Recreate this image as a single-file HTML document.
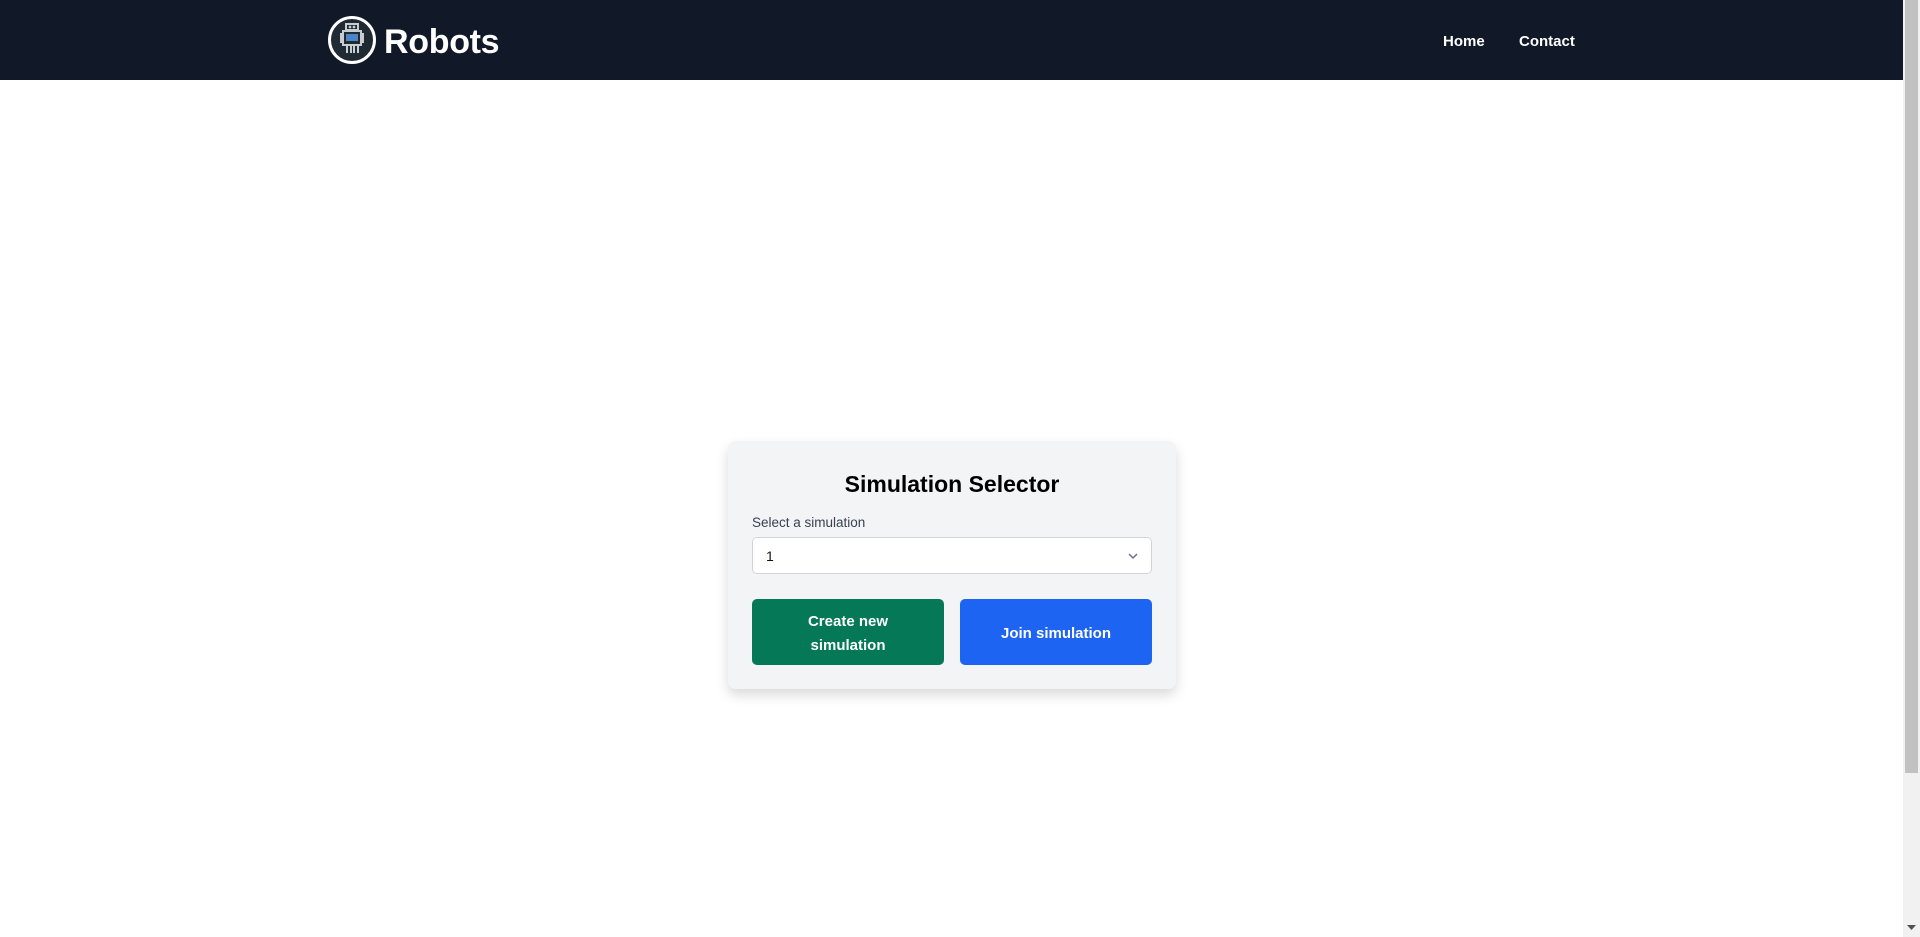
<!DOCTYPE html>
<html><head><meta charset="utf-8"><style>
*{box-sizing:border-box;margin:0;padding:0}
html,body{width:1920px;height:937px;overflow:hidden;background:#fff;font-family:"Segoe UI","Liberation Sans",sans-serif}
.hdr{position:absolute;left:0;top:0;width:1903px;height:80px;background:#111827}
.logo{position:absolute;left:327px;top:15px}
.brand{position:absolute;left:384px;top:17px;color:#fff;font-size:34px;font-weight:600;line-height:50px;letter-spacing:-0.3px}
.nav{position:absolute;top:31px;color:#fff;font-size:15px;font-weight:700;line-height:22px}
.sb{position:absolute;left:1903px;top:0;width:17px;height:937px;background:#f1f1f1}
.thumb{position:absolute;left:2px;top:0;width:13px;height:773px;background:#c1c1c1}
.card{position:absolute;left:728px;top:441px;width:448px;height:248px;background:#f3f4f6;border-radius:8px;box-shadow:0 6px 12px rgba(0,0,0,.15)}
.title{position:absolute;left:0;width:100%;top:27px;text-align:center;font-size:23px;font-weight:700;color:#000;line-height:32px}
.lbl{position:absolute;left:24px;top:72px;font-size:13.5px;color:#374151;line-height:20px}
.sel{position:absolute;left:24px;top:96px;width:400px;height:37px;background:#fff;border:1px solid #d1d5db;border-radius:5px;font-size:14px;color:#111;padding:9px 13px;line-height:18px}
.btn{position:absolute;top:158px;width:192px;height:66px;border-radius:5px;color:#fff;font-size:15px;font-weight:600;line-height:24px;display:flex;align-items:center;justify-content:center;text-align:center;padding-top:3px}
</style></head><body>
<div class="hdr">
<svg class="logo" width="50" height="50" viewBox="0 0 50 50">
<circle cx="25" cy="25" r="22.5" fill="#1f2a33" stroke="#fff" stroke-width="3"/>
<g fill="none" stroke="#c8cdd2" stroke-width="2">
<rect x="19" y="9" width="12" height="6"/>
<rect x="16" y="16" width="18" height="14"/>
<path d="M14 18v10M36 18v10M20 31v7M24 31v7M27 31v7M31 31v7"/>
</g>
<rect x="19" y="19" width="12" height="7" fill="#4a86c5"/>
<circle cx="23" cy="12" r="1.4" fill="#c8cdd2"/><circle cx="27" cy="12" r="1.4" fill="#c8cdd2"/>
</svg>
<div class="brand">Robots</div>
<div class="nav" style="left:1443px">Home</div>
<div class="nav" style="left:1519px">Contact</div>
</div>
<div class="card">
<div class="title">Simulation Selector</div>
<div class="lbl">Select a simulation</div>
<div class="sel">1
<svg style="position:absolute;right:12px;top:12px" width="12" height="12" viewBox="0 0 12 12"><path d="M2 4l4 4 4-4" fill="none" stroke="#6b7280" stroke-width="1.5"/></svg></div>
<div class="btn" style="left:24px;background:#047857">Create new<br>simulation</div>
<div class="btn" style="left:232px;background:#1d64f2">Join simulation</div>
</div>
<div class="sb"><div class="thumb"></div>
<svg style="position:absolute;left:4px;top:925px" width="9" height="6"><path d="M0 0h9L4.5 5z" fill="#505050"/></svg></div>
</body></html>
